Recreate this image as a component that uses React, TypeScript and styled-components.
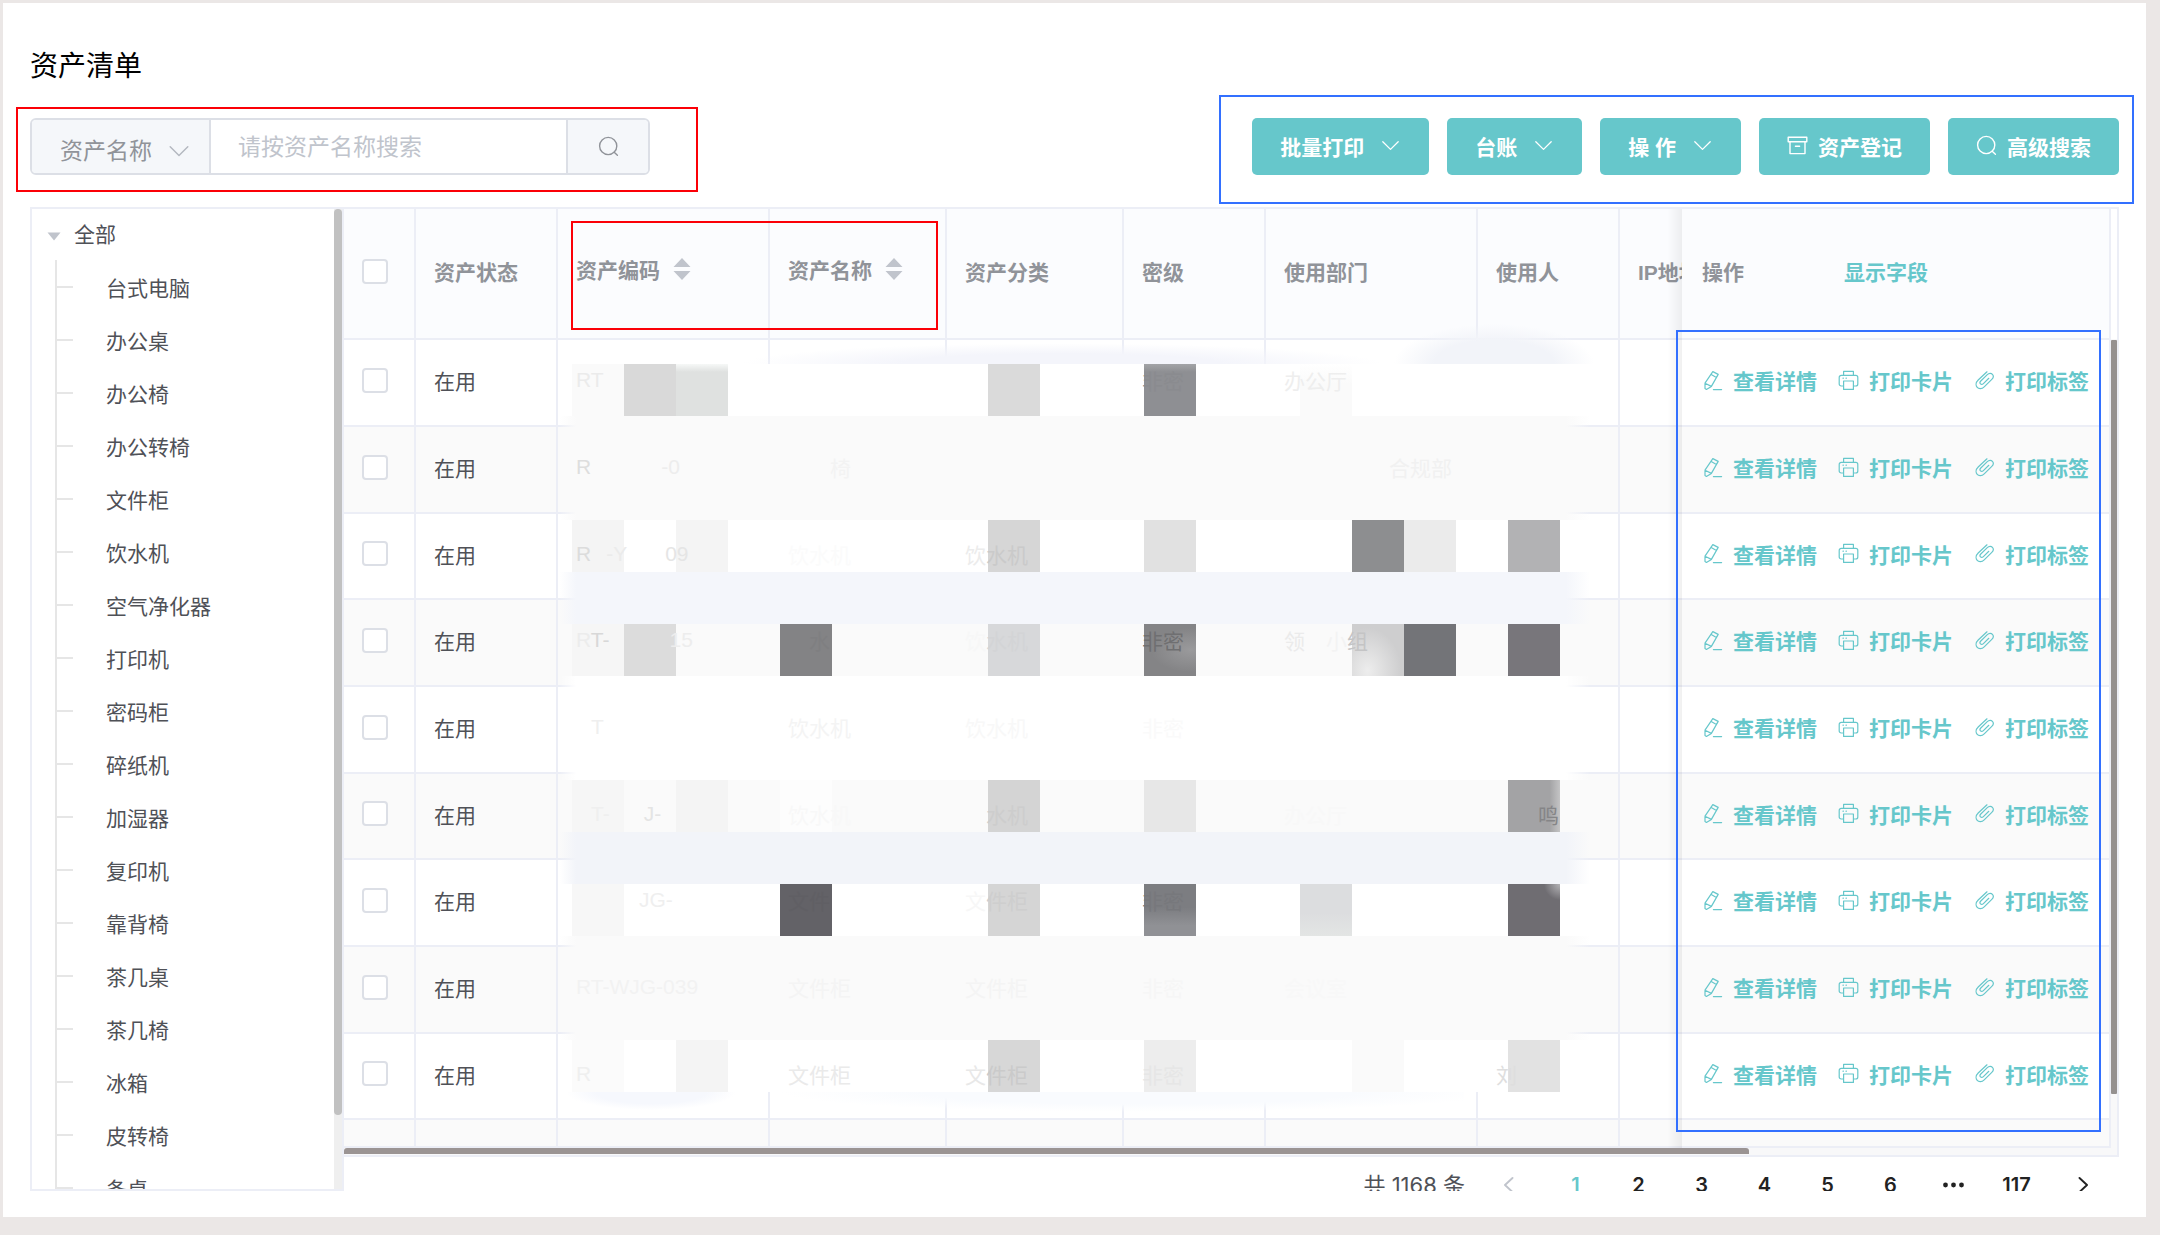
import React from 'react';
import styled, { createGlobalStyle, css } from 'styled-components';

const teal = '#66c7cb';
const line = '#eceef6';
const muted = '#909399';
const ink = '#4f5157';

const GlobalStyle = createGlobalStyle`
  *, *::before, *::after { box-sizing: border-box; }
  body {
    margin: 0;
    font-family: "Liberation Sans", "Noto Sans CJK SC", sans-serif;
    font-size: 21px;
    color: ${ink};
  }
  button, input, select { font: inherit; margin: 0; }
  button { cursor: pointer; }
  ul { list-style: none; margin: 0; padding: 0; }
`;

const Page = styled.div`
  height: 100vh;
  padding: 3px 14px 18px 3px;
  background: #ebe7e6;
  display: flex;
`;

const Card = styled.main`
  flex: 1;
  min-width: 0;
  display: flex;
  flex-direction: column;
  gap: 32px;
  padding: 45px 27px 26px;
  background: #fff;
`;

const Title = styled.h1`
  margin: 0;
  font-size: 28px;
  line-height: 38px;
  font-weight: 400;
  color: #000;
`;

const Toolbar = styled.div`
  display: flex;
  justify-content: space-between;
  height: 57px;
  flex: none;
`;

const Frame = styled.div<{ $color: string; $inset: string; $w?: string; $h?: string }>`
  position: absolute;
  inset: ${(p) => p.$inset};
  width: ${(p) => p.$w ?? 'auto'};
  height: ${(p) => p.$h ?? 'auto'};
  border: 2px solid ${(p) => p.$color};
  pointer-events: none;
  z-index: 5;
`;

const SearchArea = styled.form`
  position: relative;
  display: flex;
`;

const SearchGroup = styled.div`
  display: flex;
  width: 620px;
  border: 2px solid #dcdfe6;
  border-radius: 6px;
  overflow: hidden;
  font-size: 23px;
`;

const SelectBox = styled.div`
  display: grid;
  grid-template-columns: 100%;
  align-items: center;
  width: 179px;
  background: #f5f7fa;
  border-right: 2px solid #dcdfe6;
  color: ${muted};
  padding-top: 8px;

  > * { grid-area: 1 / 1; }
  > svg { justify-self: end; margin-right: 18px; pointer-events: none; color: #b4b8c0; }
`;

const Select = styled.select`
  appearance: none;
  width: 100%;
  height: 100%;
  padding: 0 0 0 28px;
  border: 0;
  outline: 0;
  background: transparent;
  color: inherit;
`;

const Keyword = styled.input`
  flex: 1;
  min-width: 0;
  border: 0;
  outline: 0;
  padding: 2px 27px 0;
  &::placeholder { color: #c0c4cc; opacity: 1; }
`;

const SearchButton = styled.button`
  display: flex;
  align-items: center;
  justify-content: center;
  width: 82px;
  border: 0;
  border-left: 2px solid #dcdfe6;
  background: #f5f7fa;
  color: ${muted};
`;

const Actions = styled.div`
  position: relative;
  display: flex;
  gap: 18px;
`;

const ActionButton = styled.button<{ $gap: number }>`
  display: flex;
  align-items: center;
  gap: ${(p) => p.$gap}px;
  padding: 0 28px 2px;
  border: 0;
  border-radius: 5px;
  background: ${teal};
  color: #fff;
  font-weight: 700;
  white-space: nowrap;
`;

const Body = styled.div`
  flex: 1;
  min-height: 0;
  display: flex;
`;

const TreePanel = styled.nav`
  flex: none;
  display: flex;
  width: 314px;
  border: 2px solid ${line};
  overflow: hidden;
  white-space: nowrap;
`;

const TreeScroll = styled.div`
  flex: 1;
  overflow: hidden;
`;

const TreeRoot = styled.div`
  display: flex;
  align-items: center;
  gap: 13px;
  height: 51px;
  padding: 0 0 4px 15px;
`;

const TreeList = styled.ul`
  margin-left: 23px;
  border-left: 2px solid #e6e6e6;
`;

const TreeItem = styled.li`
  display: flex;
  align-items: center;
  gap: 33px;
  height: 53px;
  &::before { content: ''; width: 16px; height: 2px; background: #e6e6e6; }
`;

const TreeBar = styled.div`
  width: 8px;
  background: #efefef;
  &::before {
    content: '';
    display: block;
    height: calc(100% - 74px);
    border-radius: 4px;
    background: #c1c1c1;
  }
`;

const TableSide = styled.section`
  flex: 1;
  min-width: 0;
  display: flex;
  flex-direction: column;
`;

const TablePanel = styled.div`
  flex: 1;
  min-height: 0;
  display: grid;
  grid-template-columns: minmax(0, 1fr) 6px;
  grid-template-rows: minmax(0, 1fr) 7px;
  border: 2px solid ${line};
  border-left: 0;
`;

const Viewport = styled.div`
  position: relative;
  overflow: hidden;
`;

const VerticalBar = styled.div`
  padding-top: 131px;
  background: linear-gradient(#fff 130px, #f8f8f9 130px);
  &::before {
    content: '';
    display: block;
    height: 754px;
    border-radius: 1px;
    background: #959190;
  }
`;

const HorizontalBar = styled.div`
  grid-column: 1 / -1;
  background: #f8f8f9;
  &::before {
    content: '';
    display: block;
    width: calc(100% - 368px);
    height: 6px;
    border-radius: 3px 3px 0 0;
    background: #9b9493;
  }
`;

const Table = styled.table`
  table-layout: fixed;
  width: max(1847px, 100%);
  border-collapse: separate;
  border-spacing: 0;
`;

const cell = css`
  padding: 0 0 5px 18px;
  border-right: 2px solid ${line};
  border-bottom: 2px solid ${line};
  text-align: left;
  white-space: nowrap;
  overflow: hidden;
`;

const pinned = css`
  position: sticky;
  right: 0;
  z-index: 3;
  padding-left: 20px;
  overflow: visible;
  &::before {
    content: '';
    position: absolute;
    top: 0;
    bottom: -2px;
    left: -14px;
    width: 14px;
    background: linear-gradient(90deg, rgba(0, 0, 0, 0), rgba(0, 0, 0, 0.06));
  }
`;

const HeadCell = styled.th<{ $sortable?: boolean; $pinned?: boolean }>`
  ${cell}
  height: 131px;
  background: #fbfcfe;
  color: ${muted};
  font-weight: 700;
  ${(p) => p.$sortable && css`padding-bottom: 10px;`}
  ${(p) => p.$pinned && pinned}
`;

const HeadInner = styled.div<{ $gap: number }>`
  display: flex;
  align-items: center;
  gap: ${(p) => p.$gap}px;
`;

const LinkButton = styled.button`
  display: flex;
  align-items: center;
  gap: 10px;
  padding: 0;
  border: 0;
  background: none;
  color: ${teal};
  font-weight: 700;
`;

const Row = styled.tr`
  height: 87px;
  background: #fff;
  &:nth-child(3n) { height: 86px; }
  &:nth-child(even) { background: #fafafa; }
  &:last-child { height: 28px; }
`;

const Cell = styled.td<{ $pinned?: boolean }>`
  ${cell}
  ${(p) => p.$pinned && pinned}
  background: inherit;
`;

const RowActions = styled.div`
  display: flex;
  gap: 21px;
`;

const Check = styled.input`
  appearance: none;
  display: block;
  width: 26px;
  height: 25px;
  border: 2px solid #dcdfe6;
  border-radius: 4px;
  background: #fff;
`;

const Trace = styled.span<{ $color: string; $before?: number }>`
  position: relative;
  z-index: 2;
  margin-left: ${(p) => p.$before ?? 0}px;
  color: ${(p) => p.$color};
`;

const Mosaic = styled.div`
  position: absolute;
  z-index: 1;
  top: 155px;
  left: 216px;
  display: grid;
  grid-template-columns: 12px repeat(19, 52px) 30px;
  grid-template-rows: repeat(14, 52px);
  pointer-events: none;
`;

const Band = styled.div<{ $row: number; $color: string }>`
  grid-area: ${(p) => p.$row} / 1 / auto / -1;
  background: ${(p) => `linear-gradient(90deg, transparent, ${p.$color} 16px, ${p.$color} calc(100% - 24px), transparent)`};
`;

const Tile = styled.div<{ $row: number; $col: number; $fill: string }>`
  grid-area: ${(p) => p.$row} / ${(p) => p.$col + 1};
  background: ${(p) => p.$fill};
`;

const Smudge = styled.div<{ $top: number; $left: number; $w: number; $h: number; $fill: string }>`
  position: absolute;
  z-index: 1;
  top: ${(p) => p.$top}px;
  left: ${(p) => p.$left}px;
  width: ${(p) => p.$w}px;
  height: ${(p) => p.$h}px;
  background: ${(p) => p.$fill};
`;

const Pager = styled.div`
  flex: none;
  height: 34px;
  overflow: hidden;
  display: flex;
  justify-content: flex-end;
  align-items: flex-start;
  font-family: Inter, "Noto Sans CJK SC", sans-serif;
  font-size: 20px;
  line-height: 56px;
`;

const Total = styled.span`
  padding-right: 8px;
  font-size: 22px;
`;

const PageButton = styled.button<{ $active?: boolean; $wide?: boolean }>`
  display: flex;
  align-items: center;
  justify-content: center;
  width: ${(p) => (p.$wide ? 71 : 63)}px;
  height: 56px;
  padding: 0;
  border: 0;
  background: none;
  font-weight: 600;
  color: ${(p) => (p.$active ? teal : '#222')};
  &:disabled { color: #c0c4cc; }
`;

const strokeProps = { fill: 'none', stroke: 'currentColor', strokeLinecap: 'round', strokeLinejoin: 'round' } as const;

const Chevron = ({ size = 21 }: { size?: number }) => (
  <svg width={size} height={size} viewBox="0 0 21 21" {...strokeProps} strokeWidth="1.3" aria-hidden="true">
    <path d="M2.8 6.8 10.5 14.4 18.2 6.8" />
  </svg>
);

const SearchIcon = () => (
  <svg width="21" height="21" viewBox="0 0 21 21" {...strokeProps} strokeWidth="1.4" aria-hidden="true">
    <circle cx="10.2" cy="10" r="8.6" />
    <path d="M16.2 16.2 19.4 19.2" />
  </svg>
);

const BoxIcon = () => (
  <svg width="21" height="21" viewBox="0 0 21 21" {...strokeProps} strokeWidth="1.4" aria-hidden="true">
    <path d="M1.2 2.2h18.6v4.6H1.2zM3 6.8v11.8h15V6.8M8.4 11.2h4.2" />
  </svg>
);

const EditIcon = () => (
  <svg width="21" height="21" viewBox="0 0 21 21" {...strokeProps} strokeWidth="1.2" aria-hidden="true">
    <path d="M10.8 1.6 16.2 4.4 9.4 16.4 4.4 19.4 3 18.6 3 13.2zM9.2 4.600l5.200 3M3 13.2l6.400 3.200M11.400 19.600h8.200" />
  </svg>
);

const PrintIcon = () => (
  <svg width="21" height="21" viewBox="0 0 21 21" {...strokeProps} strokeWidth="1.2" aria-hidden="true">
    <path d="M5.6 5.4V1.4h9.8v4M5.6 16H3.2a2 2 0 0 1-2-2V7.4a2 2 0 0 1 2-2h14.6a2 2 0 0 1 2 2V14a2 2 0 0 1-2 2h-2.4M5.6 11h9.8v8.4H5.6zM5 8.2h.4M8 8.2h.4" />
  </svg>
);

const ClipIcon = () => (
  <svg width="21" height="21" viewBox="0 0 21 21" {...strokeProps} strokeWidth="1.2" aria-hidden="true">
    <path d="M13 1.800 4.200 10C1.600 12.500 1.600 15.600 3.200 17.400s4.600 1.800 7-.6l7.600-7.400c1.800-1.800 1.800-3.800.6-5.100s-3.400-1.300-5.100.4L6.800 11c-1 1-1 2.200-.3 2.900s1.900.7 2.900-.3l5.400-5.300" />
  </svg>
);

const Arrow = ({ flip }: { flip?: boolean }) => (
  <svg width="11" height="18" viewBox="0 0 11 18" {...strokeProps} strokeWidth="1.900" aria-hidden="true">
    <path d={flip ? 'M9.500 2 2 9l7.500 7' : 'M1.500 2 9 9l-7.500 7'} />
  </svg>
);

const SortIcon = () => (
  <svg width="18" height="22" viewBox="0 0 18 22" fill="#c0c4cc" aria-hidden="true">
    <path d="M9 0 17.500 9H.5zM9 22 17.500 13H.5z" />
  </svg>
);

const kinds = ['台式电脑', '办公桌', '办公椅', '办公转椅', '文件柜', '饮水机', '空气净化器', '打印机', '密码柜', '碎纸机', '加湿器', '复印机', '靠背椅', '茶几桌', '茶几椅', '冰箱', '皮转椅', '条桌'];

const columns: { label: string; width: number; sortable?: boolean }[] = [
  { label: '资产状态', width: 142 },
  { label: '资产编码', width: 212, sortable: true },
  { label: '资产名称', width: 177, sortable: true },
  { label: '资产分类', width: 177 },
  { label: '密级', width: 142 },
  { label: '使用部门', width: 212 },
  { label: '使用人', width: 142 },
  { label: 'IP地址', width: 142 },
];

type Bit = [text: string, color: string, before?: number];

// What stays legible of each masked row: code, name, category, level, department, user.
const traces: Bit[][][] = [
  [[['RT', '#ebebeb']], [], [], [['非密', '#8a8b8f']], [['办公厅', '#eeeeee']], []],
  [[['R', '#dedede'], ['-0', '#ededed', 70]], [['椅', '#f3f3f3', 42]], [], [], [['合规部', '#f1f1f1', 105]], []],
  [[['R', '#dcdcdc'], ['-Y', '#ebebeb', 15], ['09', '#e5e5e5', 38]], [['饮水机', '#fbfbfb']], [['饮', '#ececec'], ['水机', '#cacaca']], [], [], []],
  [[['R', '#ececec'], ['T-', '#d8d8d8'], ['15', '#ededed', 60]], [['水', '#7f7f81', 21]], [['饮', '#f7f7f7'], ['水机', '#d3d4d6']], [['非密', '#6f6f71']], [['领', '#ebebeb'], ['小', '#f3f3f3', 21], ['组', '#c4c4c5']], []],
  [[['T', '#efefef', 15]], [['饮水机', '#f4f4f4']], [['饮水机', '#f8f8f8']], [['非密', '#fafafa']], [], []],
  [[['T-', '#efefef', 15], ['J-', '#e4e4e4', 34]], [['饮水机', '#f8f8f8']], [['水机', '#cdcdcd', 21]], [], [['办公厅', '#f8f8f8']], [['鸣', '#858587', 42]]],
  [[['JG-', '#efefef', 63]], [['文件', '#605f64']], [['文', '#f7f7f7'], ['件柜', '#cecece']], [['非密', '#77787c']], [], []],
  [[['RT-WJG-039', '#f2f2f2']], [['文件柜', '#f4f4f4']], [['文件柜', '#f4f4f4']], [['非密', '#f6f6f6']], [['会议室', '#f8f8f8']], []],
  [[['R', '#efefef']], [['文件柜', '#eaeaea']], [['文', '#e8e8e8'], ['件柜', '#cacaca']], [['非密', '#e6e6e6']], [], [['刘', '#dedede']]],
];

const bands = ['#fff', '#fafafa', '#fafafa', '#fff', '#f4f6fb', '#fafafa', '#fff', '#fff', '#fafafa', '#f2f4f9', '#fff', '#fafafa', '#fafafa', '#fff'];

const tiles: [row: number, col: number, fill: string][] = [
  [1, 1, '#fafafa'], [1, 2, '#d9d9d9'], [1, 3, 'linear-gradient(#f6f8f7, #dfe1e0 8px)'], [1, 9, '#dadada'], [1, 12, 'linear-gradient(#a3a4a7, #8e8f93 8px)'], [1, 15, 'linear-gradient(#fff, #fafafa 20px)'],
  [4, 1, '#f4f4f4'], [4, 3, '#f4f4f4'], [4, 9, '#d6d6d6'], [4, 12, '#e1e1e1'], [4, 16, '#8d8e90'], [4, 17, '#ebebeb'], [4, 19, '#b2b2b4'],
  [6, 1, '#f6f6f6'], [6, 2, '#dcdcdc'], [6, 5, '#838385'], [6, 9, '#d7d8da'], [6, 12, 'radial-gradient(ellipse at 90% 50%, #9a9a9c, #848486 60%)'], [6, 16, 'radial-gradient(ellipse at 30% 90%, #ededed, #cececf 65%)'], [6, 17, '#737478'], [6, 19, '#78767b'],
  [9, 1, '#f6f6f6'], [9, 3, '#f4f4f4'], [9, 5, '#fdfdfd'], [9, 9, '#d4d4d4'], [9, 12, '#e7e7e7'], [9, 19, 'linear-gradient(90deg, #a3a3a5 80%, #c4c4c5)'],
  [11, 1, '#f7f7f7'], [11, 5, '#636267'], [11, 9, '#d5d5d5'], [11, 12, 'linear-gradient(#7c7d81 45%, #909195 80%)'], [11, 15, 'linear-gradient(#dcdddf 55%, #e3e5e4)'], [11, 19, 'radial-gradient(circle at 100% 0, #b4b3b6, #6f6d72 16px)'],
  [14, 1, '#fbfbfb'], [14, 3, '#f4f4f4'], [14, 9, '#d7d7d7'], [14, 12, '#ededed'], [14, 16, '#fafafa'], [14, 19, '#e2e2e2'],
];

export default function App() {
  return (
    <>
      <GlobalStyle />
      <Page>
        <Card>
          <Title>资产清单</Title>
          <Toolbar>
            <SearchArea onSubmit={(e) => e.preventDefault()}>
              <SearchGroup>
                <SelectBox>
                  <Select aria-label="搜索字段" defaultValue="资产名称">
                    <option>资产名称</option>
                  </Select>
                  <Chevron size={24} />
                </SelectBox>
                <Keyword type="text" aria-label="搜索关键字" placeholder="请按资产名称搜索" />
                <SearchButton type="submit" aria-label="搜索"><SearchIcon /></SearchButton>
              </SearchGroup>
              <Frame $color="#fb0007" $inset="-11px auto auto -14px" $w="682px" $h="85px" />
            </SearchArea>
            <Actions>
              <ActionButton $gap={16}>批量打印<Chevron /></ActionButton>
              <ActionButton $gap={16}>台账<Chevron /></ActionButton>
              <ActionButton $gap={16}>操 作<Chevron /></ActionButton>
              <ActionButton $gap={10}><BoxIcon />资产登记</ActionButton>
              <ActionButton $gap={10}><SearchIcon />高级搜索</ActionButton>
              <Frame $color="#3370ff" $inset="-23px -15px -29px -33px" />
            </Actions>
          </Toolbar>
          <Body>
            <TreePanel aria-label="资产分类">
              <TreeScroll>
                <TreeRoot>
                  <svg width="14" height="17" viewBox="0 0 14 17" fill="#c0c4cc" aria-hidden="true"><path d="M.5 8.500h13L7 16.500z" /></svg>
                  全部
                </TreeRoot>
                <TreeList>
                  {kinds.map((kind) => <TreeItem key={kind}>{kind}</TreeItem>)}
                </TreeList>
              </TreeScroll>
              <TreeBar />
            </TreePanel>
            <TableSide>
              <TablePanel>
                <Viewport>
                  <Table>
                    <colgroup>
                      <col style={{ width: 72 }} />
                      {columns.map((c) => <col key={c.label} style={{ width: c.width }} />)}
                      <col style={{ width: 429 }} />
                    </colgroup>
                    <thead>
                      <tr>
                        <HeadCell><Check type="checkbox" aria-label="全选" /></HeadCell>
                        {columns.map((c) => (
                          <HeadCell key={c.label} $sortable={c.sortable}>
                            {c.sortable ? <HeadInner $gap={13}>{c.label}<SortIcon /></HeadInner> : c.label}
                          </HeadCell>
                        ))}
                        <HeadCell $pinned>
                          <HeadInner $gap={100}>操作<LinkButton>显示字段</LinkButton></HeadInner>
                        </HeadCell>
                      </tr>
                    </thead>
                    <tbody>
                      {traces.map((row, i) => (
                        <Row key={i}>
                          <Cell><Check type="checkbox" aria-label={`选择第 ${i + 1} 行`} /></Cell>
                          <Cell>在用</Cell>
                          {row.map((bits, j) => (
                            <Cell key={j}>
                              {bits.map(([text, color, before], k) => (
                                <Trace key={k} $color={color} $before={before}>{text}</Trace>
                              ))}
                            </Cell>
                          ))}
                          <Cell />
                          <Cell $pinned>
                            <RowActions>
                              <LinkButton><EditIcon />查看详情</LinkButton>
                              <LinkButton><PrintIcon />打印卡片</LinkButton>
                              <LinkButton><ClipIcon />打印标签</LinkButton>
                            </RowActions>
                          </Cell>
                        </Row>
                      ))}
                      <Row>
                        <Cell />
                        {columns.map((c) => <Cell key={c.label} />)}
                        <Cell $pinned />
                      </Row>
                    </tbody>
                  </Table>
                  <Smudge $top={132} $left={398} $w={640} $h={23} $fill="radial-gradient(ellipse 50% 90% at 50% 100%, #f4f5fb 50%, rgba(244, 245, 251, 0))" />
                  <Smudge $top={115} $left={1050} $w={200} $h={40} $fill="radial-gradient(ellipse 50% 100% at 50% 100%, #f2f4f9 60%, rgba(242, 244, 249, 0))" />
                  <Smudge $top={883} $left={222} $w={170} $h={18} $fill="radial-gradient(ellipse 50% 100% at 50% 0, #f6f8fd 65%, rgba(246, 248, 253, 0))" />
                  <Smudge $top={883} $left={400} $w={720} $h={20} $fill="radial-gradient(ellipse 50% 100% at 55% 0, #f9fbfe 60%, rgba(249, 251, 254, 0))" />
                  <Mosaic>
                    {bands.map((color, i) => <Band key={i} $row={i + 1} $color={color} />)}
                    {tiles.map(([row, col, fill]) => <Tile key={`${row}-${col}`} $row={row} $col={col} $fill={fill} />)}
                  </Mosaic>
                  <Frame $color="#fb0007" $inset="12px auto auto 227px" $w="367px" $h="109px" />
                  <Frame $color="#3370ff" $inset="121px 10px auto auto" $w="425px" $h="802px" />
                </Viewport>
                <VerticalBar />
                <HorizontalBar />
              </TablePanel>
              <Pager>
                <Total>共 1168 条</Total>
                <PageButton $wide disabled aria-label="上一页"><Arrow flip /></PageButton>
                {['1', '2', '3', '4', '5', '6'].map((n) => (
                  <PageButton key={n} $active={n === '1'}>{n}</PageButton>
                ))}
                <PageButton aria-label="向后翻页">
                  <svg width="21" height="6" viewBox="0 0 21 6" fill="currentColor" aria-hidden="true">
                    <circle cx="2.500" cy="3" r="2.400" /><circle cx="10.500" cy="3" r="2.400" /><circle cx="18.500" cy="3" r="2.400" />
                  </svg>
                </PageButton>
                <PageButton>117</PageButton>
                <PageButton $wide aria-label="下一页"><Arrow /></PageButton>
              </Pager>
            </TableSide>
          </Body>
        </Card>
      </Page>
    </>
  );
}
